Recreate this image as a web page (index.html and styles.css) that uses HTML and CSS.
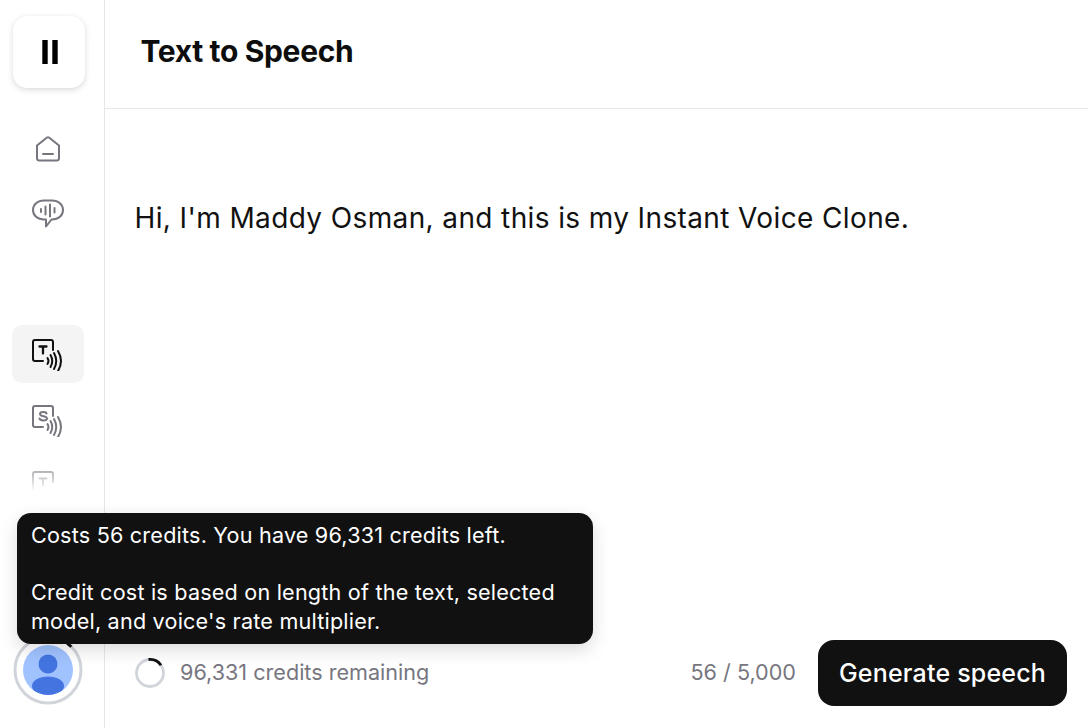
FILE: index.html
```html
<!DOCTYPE html>
<html lang="en">
<head>
<meta charset="utf-8">
<title>Text to Speech</title>
<link rel="stylesheet" href="styles.css">
</head>
<body>
<div class="app">
  <aside class="sidebar">
    <div class="logo-card">
      <svg class="logo-icon" width="18" height="24" viewBox="0 0 18 24"><rect x="2.300" y="0" width="5.400" height="24" fill="#000"/><rect x="12.300" y="0" width="5.400" height="24" fill="#000"/></svg>
    </div>
    <nav class="nav-top">
      <a class="nav-item">
        <svg width="26" height="27" viewBox="0 0 26 27" fill="none" stroke="#77767f" stroke-width="2" stroke-linejoin="round" stroke-linecap="round"><path d="M2 10.500 12 2.500q1-.7 2 0L24 10.500V23a2.500 2.500 0 0 1-2.500 2.500h-17A2.500 2.500 0 0 1 2 23Z"/><path d="M8 19h10"/></svg>
      </a>
      <a class="nav-item">
        <svg width="32" height="31" viewBox="0 0 32 31" fill="none" stroke="#77767f" stroke-width="2" stroke-linejoin="round" stroke-linecap="round"><path d="M12 2.500h8C26.500 2.500 31 6.500 31 12s-4.500 9.500-11 9.500h-.5l-5.500 7V21.500H12C5.500 21.500 1 17.500 1 12S5.500 2.500 12 2.500Z"/><path d="M9 11v3M13.500 8.500v8M18 6.500v12M22.500 10v4.500"/></svg>
      </a>
    </nav>
    <nav class="nav-tools">
      <a class="nav-item tool active">
        <svg class="tool-icon" width="32" height="33" viewBox="0 -1 32 33" fill="none" stroke="#111" stroke-width="2" stroke-linecap="round" stroke-linejoin="round"><path d="M11 22H3a2 2 0 0 1-2-2V3a2 2 0 0 1 2-2h16a2 2 0 0 1 2 2v8"/><path d="M7.500 7.500h7M11 7.500v7" stroke-width="2.300"/><path d="M15.500 19q2 3 0 6"/><path d="M18.500 16q3.500 6 0 12"/><path d="M22 14q4.500 8 0 16"/><path d="M26 12q6 10 0 20"/></svg>
      </a>
      <a class="nav-item tool">
        <svg class="tool-icon" width="32" height="33" viewBox="0 -1 32 33" fill="none" stroke="#77767f" stroke-width="2" stroke-linecap="round" stroke-linejoin="round"><path d="M11 22H3a2 2 0 0 1-2-2V3a2 2 0 0 1 2-2h16a2 2 0 0 1 2 2v8"/><path d="M14.500 8.500C14 6.500 8 6.500 8 9c0 3 7 1.500 7 4.500 0 2.500-7 2.500-7.500 0"/><path d="M15.500 19q2 3 0 6"/><path d="M18.500 16q3.500 6 0 12"/><path d="M22 14q4.500 8 0 16"/><path d="M26 12q6 10 0 20"/></svg>
      </a>
      <a class="nav-item tool">
        <svg class="tool-icon" width="32" height="33" viewBox="0 -1 32 33" fill="none" stroke="#77767f" stroke-width="2" stroke-linecap="round" stroke-linejoin="round"><path d="M11 22H3a2 2 0 0 1-2-2V3a2 2 0 0 1 2-2h16a2 2 0 0 1 2 2v8"/><path d="M7.500 7.500h7M11 7.500v7"/></svg>
      </a>
      <a class="nav-item tool">
        <svg width="32" height="32" viewBox="0 0 32 32" fill="none" stroke="#77767f" stroke-width="2" stroke-linecap="round"><path d="M6 10v8M11 4v20M16 8v12M21 2v24M26 10v8"/></svg>
      </a>
      <div class="tools-fade"></div>
    </nav>
    <div class="account">
      <svg class="avatar" width="70" height="70" viewBox="0 0 70 70" fill="none">
        <circle cx="35" cy="35" r="33" stroke="#d1d5db" stroke-width="3"/>
        <path d="M35 2A33 33 0 0 1 58.300 11.700" stroke="#111" stroke-width="3"/>
        <clipPath id="avatar-clip"><circle cx="35" cy="35" r="25"/></clipPath>
        <circle cx="35" cy="35" r="25" fill="#a0c3ff"/>
        <g clip-path="url(#avatar-clip)" fill="#4374e0">
          <circle cx="35" cy="29" r="9.500"/>
          <ellipse cx="35" cy="51" rx="16" ry="9.500"/>
        </g>
      </svg>
    </div>
  </aside>
  <main class="main">
    <header class="topbar">
      <h1 class="title">Text to Speech</h1>
    </header>
    <section class="editor">
      <p class="editor-text">Hi, I'm Maddy Osman, and this is my Instant Voice Clone.</p>
    </section>
    <footer class="actions">
      <div class="credits">
        <svg class="credit-ring" width="30" height="30" viewBox="0 0 30 30" fill="none"><circle cx="15" cy="15" r="13.500" stroke="#d1d5db" stroke-width="2.800"/><path d="M13.500 1.500A13.500 13.500 0 0 1 26 7.200" stroke="#111" stroke-width="2.800"/></svg>
        <span>96,331 credits remaining</span>
      </div>
      <div class="submit">
        <span class="count">56 / 5,000</span>
        <button class="generate">Generate speech</button>
      </div>
    </footer>
  </main>
  <div class="tooltip">
    <p>Costs 56 credits. You have 96,331 credits left.</p>
    <p>Credit cost is based on length of the text, selected model, and voice's rate multiplier.</p>
  </div>
</div>
</body>
</html>
```
FILE: styles.css
```css
* { box-sizing: border-box; margin: 0; padding: 0; }
html, body { width: 100%; height: 100%; overflow: hidden; }
body { background: #fff; color: #111; font-family: Inter, "Liberation Sans", sans-serif; }
.app { position: relative; display: flex; width: 1088px; height: 728px; }

.sidebar { width: 105px; flex: none; border-right: 1px solid #e5e7eb; display: flex; flex-direction: column; align-items: flex-start; padding-left: 12px; }
.logo-card { width: 72px; height: 72px; margin-top: 16px; margin-left: 1px; border-radius: 14px; background: #fff; box-shadow: 0 2px 6px rgba(0,0,0,.14), 0 0 1px rgba(0,0,0,.08); display: flex; align-items: center; justify-content: center; }
.nav-top { margin-top: 28px; display: flex; flex-direction: column; width: 72px; }
.nav-item { width: 72px; height: 65px; display: flex; align-items: center; justify-content: center; }
.nav-tools { position: relative; margin-top: 79px; width: 72px; height: 190px; overflow: hidden; display: flex; flex-direction: column; }
.tool { height: 58px; flex: none; border-radius: 10px; margin-bottom: 8px; }
.tool.active { background: #f4f4f4; }
.tools-fade { position: absolute; left: 0; right: 0; bottom: 0; height: 60px; background: linear-gradient(rgba(255,255,255,0), #fff 60%); }
.account { margin-top: auto; margin-bottom: 23px; margin-left: 0.500px; }
.avatar { display: block; }

.main { flex: 1; min-width: 0; display: flex; flex-direction: column; }
.topbar { height: 109px; flex: none; border-bottom: 1px solid #e5e7eb; display: flex; align-items: center; padding-left: 35.500px; padding-bottom: 6px; }
.title { font-size: 30px; font-weight: 700; line-height: 36px; letter-spacing: -0.35px; color: #0d0d0d; }
.editor { flex: 1; padding: 91px 29.500px 0; }
.editor-text { font-size: 28px; line-height: 36px; letter-spacing: 0.38px; color: #111; }
.actions { flex: none; height: 119px; display: flex; align-items: flex-start; justify-content: space-between; padding: 30px 21px 0 30px; }
.credits { display: flex; align-items: center; gap: 15px; font-size: 21.600px; color: #77767f; height: 66px; }
.credit-ring { display: block; margin-top: 2px; }
.submit { display: flex; align-items: center; gap: 22px; margin-top: 1px; }
.count { font-size: 21.600px; color: #77767f; margin-top: -2px; }
.generate { width: 249px; height: 66px; border: 0; border-radius: 16px; background: #111; color: #fff; font: 450 25px Inter, "Liberation Sans", sans-serif; letter-spacing: 0.2px; }

.tooltip { position: absolute; left: 17px; top: 513px; width: 576px; height: 131px; padding: 8px 14px; background: #111; color: #fff; border-radius: 14px; font-size: 21.600px; letter-spacing: 0.2px; line-height: 28.500px; box-shadow: 0 6px 18px rgba(0,0,0,.14); }
.tooltip p + p { margin-top: 28.500px; }
```
